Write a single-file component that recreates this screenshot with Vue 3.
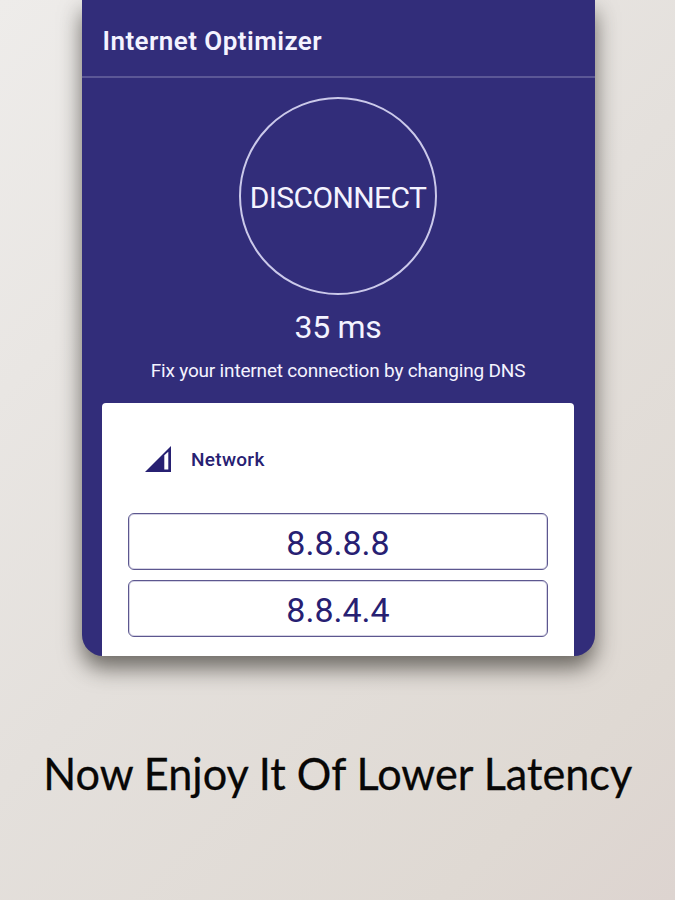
<script setup>
const servers = ['8.8.8.8', '8.8.4.4']
</script>

<template>
  <main class="promo">
    <section class="device">
      <header class="bar"><h1 class="title">Internet Optimizer</h1></header>
      <button class="toggle"><span class="toggle-label">DISCONNECT</span></button>
      <p class="ping">35 ms</p>
      <p class="hint">Fix your internet connection by changing DNS</p>
      <div class="card">
        <div class="network">
          <svg class="signal" viewBox="0 0 26 26" aria-hidden="true">
            <path fill-rule="evenodd" d="M26 0V26H0ZM19.3 9.3V23.4H23.3V5.8Z" />
          </svg>
          <span class="network-label">Network</span>
        </div>
        <div v-for="server in servers" :key="server" class="server">
          <span class="address">{{ server }}</span>
        </div>
      </div>
    </section>
    <p class="caption">Now Enjoy It Of Lower Latency</p>
  </main>
</template>

<style>
body {
  margin: 0;
}
</style>

<style scoped>
.promo {
  box-sizing: border-box;
  width: 675px;
  height: 900px;
  overflow: hidden;
  display: flex;
  flex-direction: column;
  align-items: center;
  background: linear-gradient(135deg, #eeecea 0%, #e4e0dc 50%, #dfd9d3 85%, #ddd4d0 100%);
  font-family: Roboto, sans-serif;
}
.device {
  box-sizing: border-box;
  width: 513px;
  height: 656px;
  margin-left: 1px;
  flex: none;
  display: flex;
  flex-direction: column;
  align-items: center;
  overflow: hidden;
  color: #f4f3ff;
  background: #322d7a;
  border-radius: 0 0 21px 21px;
  box-shadow: 0 12px 22px rgba(45, 42, 36, 0.66);
}
.bar {
  box-sizing: border-box;
  width: 100%;
  height: 78px;
  flex: none;
  padding: 5px 21px 0;
  display: flex;
  align-items: center;
  border-bottom: 2px solid #5b5796;
}
.title {
  margin: 0;
  font-size: 26px;
  font-weight: 600;
  line-height: 32px;
  letter-spacing: 0.45px;
}
.toggle {
  box-sizing: border-box;
  width: 198px;
  height: 198px;
  margin: 19px 0 0;
  padding: 3px 0 0;
  flex: none;
  display: flex;
  align-items: center;
  justify-content: center;
  border: 2px solid #cbc9ea;
  border-radius: 50%;
  background: transparent;
  color: inherit;
  font-family: inherit;
}
.toggle-label {
  font-size: 30px;
  line-height: 36px;
  letter-spacing: -0.6px;
  white-space: nowrap;
}
.ping {
  margin: 13px 0 0;
  font-size: 32px;
  line-height: 38px;
  letter-spacing: -0.3px;
}
.hint {
  margin: 13px 0 0;
  font-size: 19px;
  line-height: 24px;
  letter-spacing: -0.18px;
  white-space: nowrap;
}
.card {
  box-sizing: border-box;
  width: 472px;
  height: 280px;
  margin-top: 20px;
  padding: 42px 26px 0;
  flex: none;
  color: #272072;
  background: #fff;
  border-radius: 4px 4px 0 0;
}
.network {
  height: 27px;
  margin-bottom: 41px;
  padding-left: 17px;
  display: flex;
  align-items: center;
  gap: 20px;
}
.signal {
  width: 26px;
  height: 26px;
  fill: #272072;
}
.network-label {
  padding-top: 2px;
  font-size: 19px;
  font-weight: 500;
  line-height: 24px;
  letter-spacing: 0.3px;
}
.server {
  box-sizing: border-box;
  width: 420px;
  height: 57px;
  margin-bottom: 10px;
  padding-top: 3px;
  display: flex;
  align-items: center;
  justify-content: center;
  border: 1px solid #5c578f;
  border-radius: 6px;
  box-shadow: inset 0 0 0 1px #d5d3e4;
}
.address {
  font-size: 34px;
  line-height: 40px;
}
.caption {
  margin: 87px 0 0;
  color: #080706;
  font-family: Lato, sans-serif;
  font-size: 45px;
  line-height: 60px;
  white-space: nowrap;
  transform: scaleX(0.96);
  -webkit-text-stroke: 0.3px #080706;
}
</style>
